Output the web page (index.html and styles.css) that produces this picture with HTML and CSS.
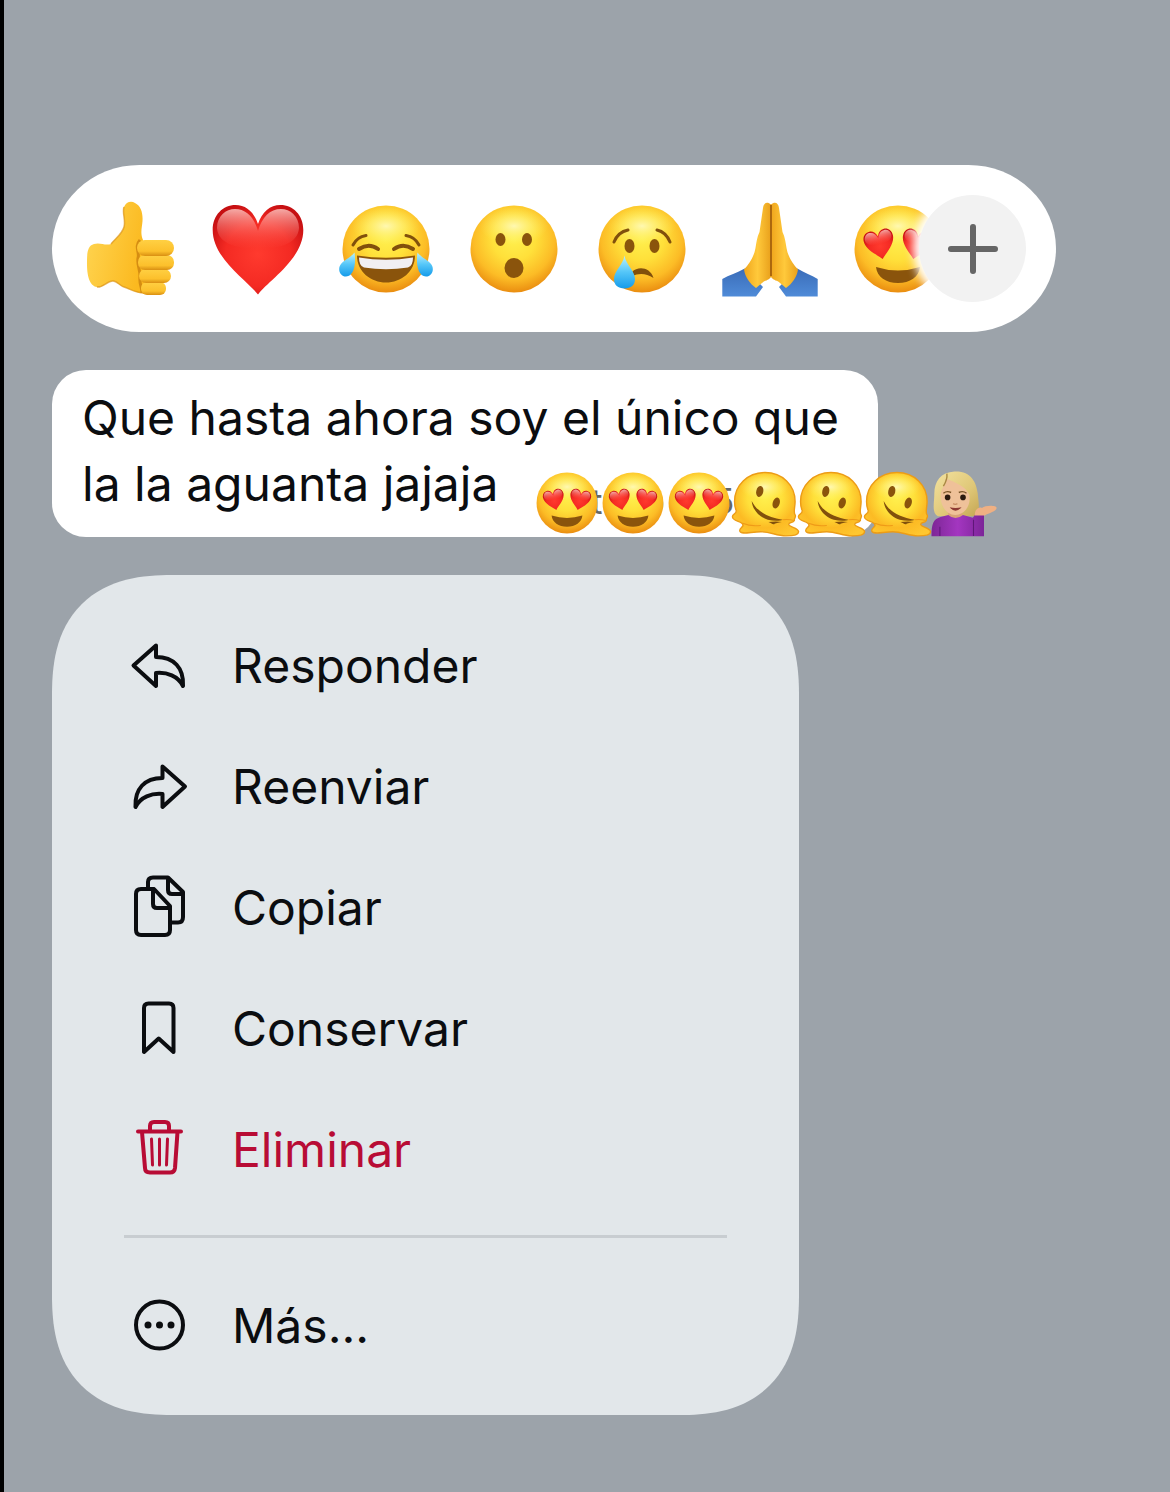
FILE: index.html
```html
<!DOCTYPE html>
<html lang="es">
<head>
  <meta charset="UTF-8">
  <meta name="viewport" content="width=device-width, initial-scale=1.0">
  <title>Mensaje</title>
  <link rel="stylesheet" href="styles.css">
</head>
<body>
  <!-- shared emoji drawings -->
  <svg class="sprite" width="0" height="0" aria-hidden="true">
    <defs>
      <radialGradient id="face" cx="50%" cy="38%" r="62%">
        <stop offset="0" stop-color="#fff04e"/>
        <stop offset="0.4" stop-color="#ffe03a"/>
        <stop offset="0.75" stop-color="#fcbc26"/>
        <stop offset="1" stop-color="#ea8d10"/>
      </radialGradient>
      <radialGradient id="shine">
        <stop offset="0" stop-color="#fffbc4" stop-opacity="0.85"/>
        <stop offset="1" stop-color="#fff36a" stop-opacity="0"/>
      </radialGradient>
      <radialGradient id="heartFill" cx="50%" cy="55%" r="60%">
        <stop offset="0" stop-color="#ff3a2e"/>
        <stop offset="0.6" stop-color="#f42a23"/>
        <stop offset="1" stop-color="#c60f12"/>
      </radialGradient>
      <linearGradient id="heartShine" x1="0" y1="0" x2="0" y2="1">
        <stop offset="0" stop-color="#ffd0cb" stop-opacity="0.8"/>
        <stop offset="1" stop-color="#ff5a50" stop-opacity="0"/>
      </linearGradient>
      <linearGradient id="tear" x1="0" y1="0" x2="0" y2="1">
        <stop offset="0" stop-color="#b9f2ff"/>
        <stop offset="0.5" stop-color="#55c6f8"/>
        <stop offset="1" stop-color="#159bea"/>
      </linearGradient>
      <linearGradient id="skin" x1="0" y1="0" x2="1" y2="0.3">
        <stop offset="0" stop-color="#ffd653"/>
        <stop offset="1" stop-color="#fbb91f"/>
      </linearGradient>
      <linearGradient id="finger" x1="0" y1="0" x2="0" y2="1">
        <stop offset="0" stop-color="#ffd043"/>
        <stop offset="0.7" stop-color="#fcc02c"/>
        <stop offset="1" stop-color="#d98f12"/>
      </linearGradient>
      <linearGradient id="palm" x1="0" y1="0" x2="1" y2="0">
        <stop offset="0" stop-color="#efa51c"/>
        <stop offset="0.5" stop-color="#ffc93b"/>
        <stop offset="1" stop-color="#e9a01b"/>
      </linearGradient>
      <linearGradient id="sleeve" x1="0" y1="0" x2="0" y2="1">
        <stop offset="0" stop-color="#3a6cb8"/>
        <stop offset="1" stop-color="#4f8bd8"/>
      </linearGradient>
      <radialGradient id="melt" gradientUnits="userSpaceOnUse" cx="50" cy="42" r="62">
        <stop offset="0" stop-color="#fff04e"/>
        <stop offset="0.4" stop-color="#ffe03a"/>
        <stop offset="0.7" stop-color="#fcbb24"/>
        <stop offset="1" stop-color="#ffc730"/>
      </radialGradient>
      <linearGradient id="hair" x1="0" y1="0" x2="1" y2="1">
        <stop offset="0" stop-color="#f3e3a0"/>
        <stop offset="0.6" stop-color="#dfc777"/>
        <stop offset="1" stop-color="#c4a653"/>
      </linearGradient>
      <linearGradient id="sweater" x1="0" y1="0" x2="1" y2="0">
        <stop offset="0" stop-color="#7d2796"/>
        <stop offset="0.5" stop-color="#a336c0"/>
        <stop offset="1" stop-color="#7c2498"/>
      </linearGradient>
    </defs>

    <symbol id="base" viewBox="0 0 100 100">
      <circle cx="50" cy="50" r="43.5" fill="url(#face)"/>
      <ellipse cx="50" cy="27" rx="34" ry="19" fill="url(#shine)"/>
    </symbol>

    <symbol id="heart" viewBox="0 0 100 100">
      <path d="M50 95.5C40 82 4.700 60 4.700 31C4.700 16 15 6 27.500 6C38 6 46 13 50 25C54 13 62 6 72.500 6C85 6 95.300 16 95.300 31C95.300 60 60 82 50 95.500Z" fill="url(#heartFill)"/>
      <path d="M50 50C30 50 10 45 9 29C9 17 18 10 27 10C38 10 46 18 50 32C54 18 62 10 73 10C82 10 91 17 91 29C90 45 70 50 50 50Z" fill="url(#heartShine)"/>
    </symbol>

    <symbol id="thumb" viewBox="0 0 100 100">
      <path d="M14 45C20 43 25 47 31 45C36 39 42 35 44 28C46 21 42 14 44 8C46 3 51 1.500 55 4C61 7 63 14 62.500 22C62 29 60 34 63 41L68 60L66 94C58 95 50 90 44 88C40 87 37 82 33 82C27 82 23 89 17 88C9 87 7 75 7 65C7 55 7 47 14 45Z" fill="url(#skin)"/>
      <path d="M31 45C36 39 42 35 44 28C46 21 42 14 44 8M17 88C23 89 27 82 33 82C37 82 40 87 44 88C50 90 56 94 64 94" fill="none" stroke="#dc9312" stroke-width="1.500" opacity="0.7"/>
      <path d="M60 41C54 48 60 53 58 59C57 66 60 70 60 77C59 85 62 88 62 94" fill="none" stroke="#d58d12" stroke-width="3"/>
      <rect x="61" y="83" width="25" height="13" rx="6" fill="url(#finger)"/>
      <rect x="59" y="70" width="32" height="14" rx="7" fill="url(#finger)"/>
      <rect x="58" y="56" width="36" height="15" rx="7" fill="url(#finger)"/>
      <rect x="57" y="41" width="37" height="16" rx="8" fill="url(#finger)"/>
    </symbol>

    <symbol id="joy" viewBox="0 0 100 100">
      <use href="#base"/>
      <g fill="none" stroke="#81500c" stroke-width="3" stroke-linecap="round">
        <path d="M17 46Q21 38 30 36.500M83 46Q79 38 70 36.500"/>
        <path d="M23 50Q33 43.500 42 50M77 50Q67 43.500 58 50" stroke-width="4"/>
      </g>
      <path d="M21 56.500Q50 61 79 56.500C79 73 65 83.500 50 83.500C35 83.500 21 73 21 56.500Z" fill="#8a540c"/>
      <path d="M23 58.500Q50 63 77 58.500Q77 67 72 68.500Q50 72 28 68.500Q23 67 23 58.500Z" fill="#f1eff2"/>
      <path d="M18.500 53.500C20 62 19 77 10 77.500C4 77.500 1 70 5 65C8 61 14 59 18.500 53.500Z" fill="url(#tear)"/>
      <path d="M81.500 53.500C80 62 81 77 90 77.500C96 77.500 99 70 95 65C92 61 86 59 81.500 53.500Z" fill="url(#tear)"/>
    </symbol>

    <symbol id="wow" viewBox="0 0 100 100">
      <use href="#base"/>
      <g fill="#8a540c">
        <ellipse cx="36.500" cy="40.500" rx="5" ry="6.500"/>
        <ellipse cx="63" cy="40.500" rx="5" ry="6.500"/>
        <ellipse cx="50" cy="69" rx="9.500" ry="10"/>
      </g>
    </symbol>

    <symbol id="cry" viewBox="0 0 100 100">
      <use href="#base"/>
      <g fill="none" stroke="#81500c" stroke-width="3" stroke-linecap="round">
        <path d="M22 43Q26 33 36 31M78 43Q74 33 65 31"/>
      </g>
      <ellipse cx="37.500" cy="47" rx="5" ry="7" fill="#8a540c"/>
      <ellipse cx="62.500" cy="47" rx="5" ry="7" fill="#8a540c"/>
      <path d="M40 73C46 67 58 68 61.500 79C54 74 47 74 40 77Z" fill="#81500c"/>
      <path d="M32.500 56.500C34 66 43 72 43 80C43 86 39 89.500 32.500 89.500C26 89.500 22 86 22 80C22 72 31 66 32.500 56.500Z" fill="url(#tear)"/>
    </symbol>

    <symbol id="pray" viewBox="0 0 100 100">
      <path d="M2.300 80C9 76 17 74 24.700 69.500L43 88L36 97.500H2.300Z" fill="url(#sleeve)"/>
      <path d="M97.700 80C91 76 85 74 77.300 69.500L59 88L66 97.500H97.700Z" fill="url(#sleeve)"/>
      <path d="M24 70.500C29 65 34 58 35.500 49C36.500 43 37 38 39.500 33L43 9C43.500 4 47 2 51 5.500V78C48 82 45 81 42 84L36 89C30 85 25 78 24 70.500Z" fill="url(#palm)"/>
      <path d="M78 70.500C73 65 68 58 66.500 49C65.500 43 65 38 62.500 33L59 9C58.500 4 55 2 51 5.500V78C54 82 57 81 60 84L66 89C72 85 77 78 78 70.500Z" fill="url(#palm)"/>
      <path d="M51 6V77" stroke="#a5610d" stroke-width="1.800"/>
    </symbol>

    <symbol id="hearteyes" viewBox="0 0 100 100">
      <use href="#base"/>
      <g transform="rotate(-12 31 45)"><use href="#heart" x="15" y="29" width="33" height="33"/></g>
      <g transform="rotate(12 69 45)"><use href="#heart" x="52" y="29" width="33" height="33"/></g>
      <path d="M28 68Q50 75 72 68C71 78 62 84 50 84C38 84 29 78 28 68Z" fill="#8a540c"/>
    </symbol>

    <symbol id="melting" viewBox="0 0 100 100">
      <path d="M50 6.500C75 6.500 93 25 93 48C93 57 90 63 93 67C95 70 91 72 92 75C90 79 83 77 84 81C86 85 97 85 98 91C98 96 90 97 80 97C66 97 58 91 44 91C30 91 16 96 14 90C13 85 22 84 17 79C13 75 4.500 76 3.500 70C3 65 9 67 9 61C7 57 6.500 53 6.500 48C6.500 25 25 6.500 50 6.500Z" fill="url(#melt)" stroke="#ec9c16" stroke-width="2"/>
      <ellipse cx="49" cy="27" rx="34" ry="19" fill="url(#shine)"/>
      <ellipse cx="42.500" cy="33.500" rx="5" ry="8" transform="rotate(12 42.500 33.500)" fill="#8a540c"/>
      <ellipse cx="66" cy="50" rx="5" ry="8" transform="rotate(18 66 50)" fill="#8a540c"/>
      <path d="M31 47C39 63 54 70 75 74C72 76 62 76 54 74C42 70 32 60 31 47ZM55 77Q65 82 63 80Q66 78 74 77Q66 76 55 77Z" fill="#81500c"/>
      <path d="M18 79Q30 84 44 82M75 74Q84 73 91 75" fill="none" stroke="#ee9a18" stroke-width="1.500"/>
    </symbol>

    <symbol id="woman" viewBox="0 0 100 100">
      <path d="M38 5C61 4 69 20 71 36C72 50 76 62 66 69H14C5 64 9 50 9 37C9 19 18 6 38 5Z" fill="url(#hair)"/>
      <path d="M29 59H49V74Q39 80 29 74Z" fill="#d9a277"/>
      <path d="M5 97.500C5 79 8 73 18 70L29 67Q39 76 50 67L64 71L67 67H80V97.500Z" fill="url(#sweater)"/>
      <path d="M17 84V97M65 74V97" stroke="#5f1778" stroke-width="1.500"/>
      <path d="M67 68C66 60 72 55 77 57C82 53 98 53 98 57C98 62 87 64 81 68Z" fill="#efb083"/>
      <path d="M18 42C17 32 24 26 25 15C38 20 54 26 59 38C62 54 52 67 39 67C27 67 19 56 18 42Z" fill="#efc199"/>
      <path d="M27 8Q28 16 22 26" fill="none" stroke="#a98a43" stroke-width="2"/>
      <path d="M22 36Q27 32 33 35M44 35Q50 32 55 36" fill="none" stroke="#7a5528" stroke-width="2"/>
      <circle cx="28" cy="42" r="4" fill="#2b1a10"/>
      <circle cx="50" cy="42" r="4" fill="#2b1a10"/>
      <path d="M36 51Q39 53 42 51" fill="none" stroke="#c98e65" stroke-width="2"/>
      <path d="M31 56Q39 58 48 56Q39 66 31 56Z" fill="#8d3a34"/>
    </symbol>
  </svg>

  <main class="overlay">
    <div class="reactions">
      <button class="reaction" aria-label="Me gusta"><svg><use href="#thumb"/></svg></button>
      <button class="reaction" aria-label="Corazón"><svg><use href="#heart"/></svg></button>
      <button class="reaction" aria-label="Risa"><svg><use href="#joy"/></svg></button>
      <button class="reaction" aria-label="Sorpresa"><svg><use href="#wow"/></svg></button>
      <button class="reaction" aria-label="Tristeza"><svg><use href="#cry"/></svg></button>
      <button class="reaction" aria-label="Gracias"><svg><use href="#pray"/></svg></button>
      <button class="reaction" aria-label="Me encanta"><svg><use href="#hearteyes"/></svg></button>
      <button class="more-reactions" aria-label="Más reacciones">
        <svg viewBox="0 0 54 54"><path d="M27 5V49M5 27H49"/></svg>
      </button>
    </div>

    <div class="bubble">
      <p class="message">Que hasta ahora soy el único que<br>la la aguanta jajaja</p>
      <span class="meta">Editado 1:15</span>
      <div class="stickers">
        <svg><use href="#hearteyes"/></svg>
        <svg><use href="#hearteyes"/></svg>
        <svg><use href="#hearteyes"/></svg>
        <svg><use href="#melting"/></svg>
        <svg><use href="#melting"/></svg>
        <svg><use href="#melting"/></svg>
        <svg><use href="#woman"/></svg>
      </div>
    </div>

    <div class="menu">
      <button class="menu-item">
        <svg viewBox="0 0 60 66"><path d="M27 12.500L4.500 32.500L27 53V40C38 39 49 43 54 53C55 35 45 24 27 24Z"/></svg>
        Responder
      </button>
      <button class="menu-item">
        <svg viewBox="0 0 60 66"><path d="M33.500 12.500L56 32.500L33.500 53V40C22.500 39 11.500 43 6.500 53C5.500 35 15.500 24 33.500 24Z"/></svg>
        Reenviar
      </button>
      <button class="menu-item">
        <svg viewBox="0 0 60 66">
          <path d="M12 14H25L41 31V55Q41 60 36 60H12Q7 60 7 55V19Q7 14 12 14Z"/>
          <path d="M24 14V29Q24 33 28 33H41"/>
          <path d="M19 13V7Q19 2.500 24 2.500H39L54 17V42Q54 47.500 49 47.500H42M39 3V15Q39 19 43 19H53"/>
        </svg>
        Copiar
      </button>
      <button class="menu-item">
        <svg viewBox="0 0 60 66"><path d="M15 56V12Q15 7.500 19.500 7.500H40Q44.500 7.500 44.500 12V56L29.700 42.500Z"/></svg>
        Conservar
      </button>
      <button class="menu-item danger">
        <svg viewBox="0 0 60 66">
          <path d="M9 14.500H52M21 14V9Q21 5 25 5H36Q40 5 40 9V14M13 15L16 51Q16 55.500 21 55.500H41Q45.500 55.500 46 51L48.500 15"/>
          <path class="thin" d="M22.500 22L23.500 48M30.500 22V48M38.500 22L37.500 48"/>
        </svg>
        Eliminar
      </button>
      <hr>
      <button class="menu-item">
        <svg viewBox="0 0 60 66">
          <circle cx="30.500" cy="32" r="23.500"/>
          <g class="dots"><circle cx="19" cy="32" r="3.500"/><circle cx="30.500" cy="32" r="3.500"/><circle cx="42" cy="32" r="3.500"/></g>
        </svg>
        Más...
      </button>
    </div>
  </main>
</body>
</html>
```
FILE: styles.css
```css
* {
  box-sizing: border-box;
}

body {
  margin: 0;
  min-height: 100vh;
  background: #9ca3aa;
  border-left: 4px solid #000;
  color: #0b0d10;
  font-family: 'Inter', sans-serif;
  font-size: 48px;
}

button {
  background: none;
  border: none;
  padding: 0;
  color: inherit;
  font: inherit;
  cursor: pointer;
}

.sprite {
  position: absolute;
}

.overlay {
  display: flex;
  flex-direction: column;
  gap: 38px;
  padding: 165px 48px 77px;
}

.reactions {
  position: relative;
  display: flex;
  align-items: center;
  width: 100%;
  max-width: 1004px;
  height: 167px;
  padding-left: 14px;
  background: #fff;
  border-radius: 88px / 84px;
}

.reaction {
  flex: 0 0 128px;
  display: flex;
  justify-content: center;
}

.reaction svg {
  width: 100px;
  height: 100px;
}

.more-reactions {
  position: absolute;
  right: 30px;
  display: flex;
  align-items: center;
  justify-content: center;
  width: 107px;
  height: 107px;
  border-radius: 50%;
  background: #f2f2f2;
  box-shadow: 0 0 10px 6px #fff;
}

.more-reactions svg {
  width: 54px;
  height: 54px;
  stroke: #666;
  stroke-width: 6;
  stroke-linecap: round;
}

.bubble {
  position: relative;
  width: 100%;
  max-width: 826px;
  padding: 15px 30px 20px;
  background: #fff;
  border-radius: 34px;
}

.message {
  margin: 0;
  line-height: 66px;
}

.meta {
  position: absolute;
  left: 488px;
  bottom: 16px;
  color: #666;
  font-size: 35px;
  line-height: 40px;
}

/* emojis stuck over the end of the message */
.stickers {
  position: absolute;
  left: 480px;
  bottom: -1px;
  display: flex;
}

.stickers svg {
  width: 70px;
  height: 70px;
  margin-right: -4px;
}

.menu {
  width: 100%;
  max-width: 747px;
  padding: 30px 72px 29px;
  background: #e2e7ea;
  border-radius: 100px;
}

.menu-item {
  display: flex;
  align-items: center;
  gap: 43px;
  width: 100%;
  height: 121px;
  padding-left: 5px;
  text-align: left;
}

.menu-item svg {
  width: 60px;
  height: 66px;
  fill: none;
  stroke: currentColor;
  stroke-width: 4;
  stroke-linecap: round;
  stroke-linejoin: round;
}

.menu-item .thin {
  stroke-width: 3;
}

.menu-item .dots {
  fill: currentColor;
  stroke: none;
}

.danger {
  color: #b80c35;
}

.menu hr {
  height: 3px;
  margin: 25px 0 27px;
  border: none;
  background: #c8cdd1;
}

@supports (corner-shape: superellipse(1.3)) {
  .menu {
    border-radius: 120px;
    corner-shape: superellipse(1.3);
  }
}
```
